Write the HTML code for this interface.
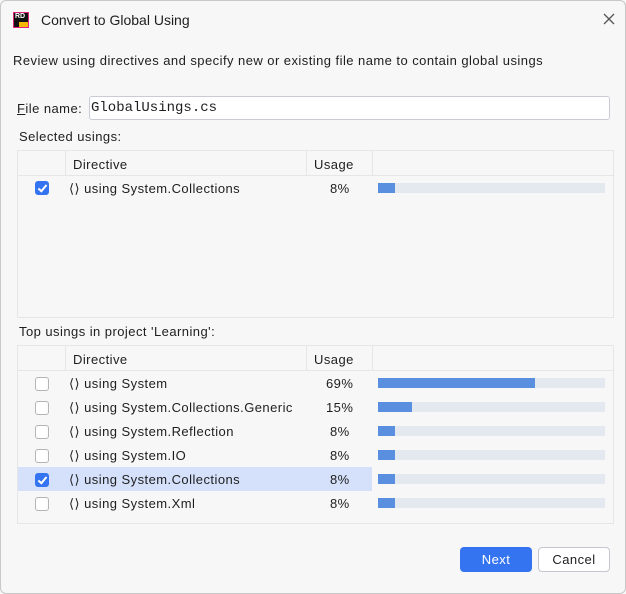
<!DOCTYPE html>
<html><head><style>
*{margin:0;padding:0;box-sizing:border-box}
body{width:626px;height:594px;background:#f7f7f7;font-family:"Liberation Sans",sans-serif;font-size:13px;letter-spacing:.45px;color:#1e1e1e;position:relative;overflow:hidden}
.frame{position:absolute;left:0;top:0;width:626px;height:594px;border:1px solid #c8c8c8;border-radius:6px}
.a{position:absolute;white-space:nowrap}
.tbl{position:absolute;left:17px;width:597px;border:1px solid #e6e6e6;background:#f7f7f7}
.hd{position:absolute;left:0;right:0;top:0;height:25px;border-bottom:1px solid #e6e6e6}
.vl{position:absolute;top:0;height:25px;width:1px;background:#e6e6e6}
.cb{position:absolute;width:14px;height:14px;border:1px solid #b5b5b5;border-radius:3px;background:#fff;left:17px}
.cb.on{background:#3574f0;border-color:#3574f0}
.cb.on:after{content:"";position:absolute;left:4px;top:1px;width:3px;height:7px;border:solid #fff;border-width:0 2px 2px 0;transform:rotate(40deg)}
.bar{position:absolute;left:360px;width:227px;height:10px;background:#e4e8ef}
.bar i{display:block;height:100%;background:#5a8fdf}
</style></head><body>
<div class="frame"></div>
<div class="a" style="left:13px;top:12px;width:16px;height:16px;background:#111;border:1px solid #e0207a"><span style="position:absolute;left:1px;top:0;color:#fff;font-size:7px;font-weight:bold;letter-spacing:0">RD</span><span style="position:absolute;right:0;bottom:0;width:9px;height:5px;background:#f5b800"></span></div>
<div class="a" style="left:41px;top:12px;font-size:14px;letter-spacing:0">Convert to Global Using</div>
<svg class="a" style="left:603px;top:13px" width="12" height="12"><path d="M1 1L11 11M11 1L1 11" stroke="#555" stroke-width="1.3"/></svg>
<div class="a" style="left:13px;top:53px">Review using directives and specify new or existing file name to contain global usings</div>
<div class="a" style="left:17px;top:101px"><u>F</u>ile name:</div>
<div class="a" style="left:89px;top:96px;width:521px;height:24px;background:#fff;border:1px solid #c9ccd6;border-radius:3px;font-family:'Liberation Mono',monospace;font-size:14px;letter-spacing:0;padding:3px 1px">GlobalUsings.cs</div>
<div class="a" style="left:19px;top:129px">Selected usings:</div>
<div class="tbl" style="top:150px;height:168px">
<div class="hd"></div><div class="vl" style="left:47px"></div><div class="vl" style="left:288px"></div><div class="vl" style="left:354px"></div>
<div class="a" style="left:55px;top:6px">Directive</div><div class="a" style="left:296px;top:6px">Usage</div>
<div class="cb on" style="top:30px"></div>
<div class="a" style="left:51px;top:30px">⟨⟩ using System.Collections</div><div class="a" style="left:312px;top:30px">8%</div>
<div class="bar" style="top:32px"><i style="width:17px"></i></div>
</div>
<div class="a" style="left:19px;top:324px">Top usings in project 'Learning':</div>
<div class="tbl" style="top:345px;height:179px">
<div class="hd"></div><div class="vl" style="left:47px"></div><div class="vl" style="left:288px"></div><div class="vl" style="left:354px"></div>
<div class="a" style="left:55px;top:6px">Directive</div><div class="a" style="left:296px;top:6px">Usage</div>
<div class="a" style="left:0;top:121px;width:354px;height:24px;background:#d5e1fb"></div>
<div class="cb" style="top:31px"></div><div class="a" style="left:51px;top:30px">⟨⟩ using System</div><div class="a" style="left:308px;top:30px">69%</div><div class="bar" style="top:32px"><i style="width:157px"></i></div>
<div class="cb" style="top:55px"></div><div class="a" style="left:51px;top:54px">⟨⟩ using System.Collections.Generic</div><div class="a" style="left:308px;top:54px">15%</div><div class="bar" style="top:56px"><i style="width:34px"></i></div>
<div class="cb" style="top:79px"></div><div class="a" style="left:51px;top:78px">⟨⟩ using System.Reflection</div><div class="a" style="left:312px;top:78px">8%</div><div class="bar" style="top:80px"><i style="width:17px"></i></div>
<div class="cb" style="top:103px"></div><div class="a" style="left:51px;top:102px">⟨⟩ using System.IO</div><div class="a" style="left:312px;top:102px">8%</div><div class="bar" style="top:104px"><i style="width:17px"></i></div>
<div class="cb on" style="top:127px"></div><div class="a" style="left:51px;top:126px">⟨⟩ using System.Collections</div><div class="a" style="left:312px;top:126px">8%</div><div class="bar" style="top:128px"><i style="width:17px"></i></div>
<div class="cb" style="top:151px"></div><div class="a" style="left:51px;top:150px">⟨⟩ using System.Xml</div><div class="a" style="left:312px;top:150px">8%</div><div class="bar" style="top:152px"><i style="width:17px"></i></div>
</div>
<div class="a" style="left:460px;top:547px;width:72px;height:25px;background:#3574f0;border-radius:4px;color:#fff;text-align:center;line-height:25px">Next</div>
<div class="a" style="left:538px;top:547px;width:72px;height:25px;background:#fff;border:1px solid #c4c7cf;border-radius:4px;text-align:center;line-height:23px">Cancel</div>
</body></html>
